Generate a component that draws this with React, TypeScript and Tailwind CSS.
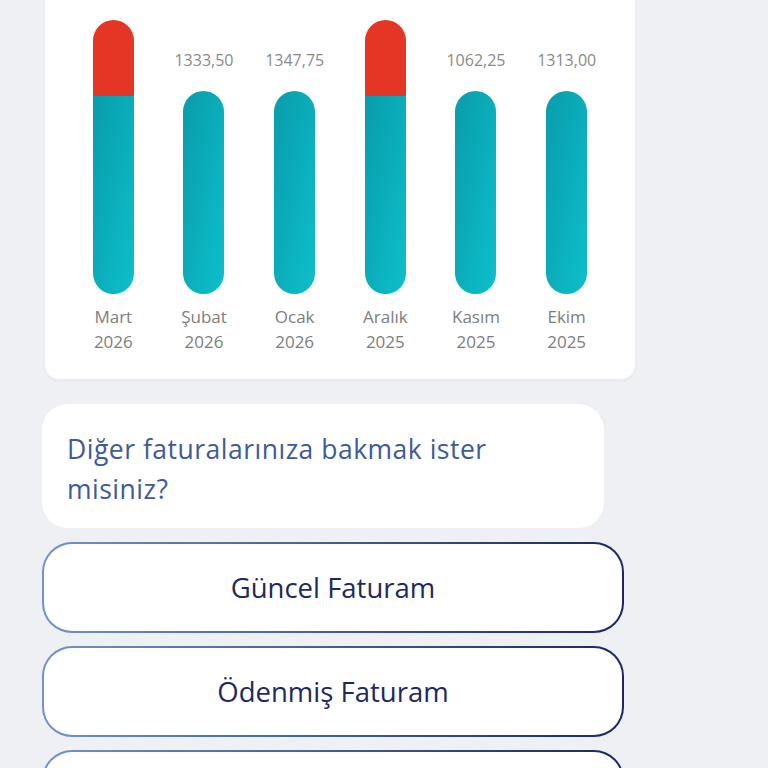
import React from 'react';

type Bill = {
  month: string;
  year: string;
  value?: string;
  over?: boolean;
};

const bills: Bill[] = [
  { month: 'Mart', year: '2026', over: true },
  { month: 'Şubat', year: '2026', value: '1333,50' },
  { month: 'Ocak', year: '2026', value: '1347,75' },
  { month: 'Aralık', year: '2025', over: true },
  { month: 'Kasım', year: '2025', value: '1062,25' },
  { month: 'Ekim', year: '2025', value: '1313,00' },
];

const BarColumn: React.FC<{ bill: Bill }> = ({ bill }) => {
  return (
    <div className="flex flex-col items-center">
      <div className="flex h-[294px] flex-col items-center justify-end">
        {bill.value && (
          <span className="mb-[20px] text-[16px] leading-[22px] text-[#8a8a8a]">{bill.value}</span>
        )}
        {bill.over ? (
          <div className="flex w-[41px] flex-col overflow-hidden rounded-full">
            <div className="h-[76px] bg-[#e53524]" />
            <div className="h-[198px] bg-gradient-to-br from-[#0a9cab] to-[#0cbfca]" />
          </div>
        ) : (
          <div className="h-[203px] w-[41px] rounded-full bg-gradient-to-br from-[#0a9cab] to-[#0cbfca]" />
        )}
      </div>
      <div className="mt-[10px] text-center text-[17px] leading-[25px] text-[#7d7d7d]">
        <div>{bill.month}</div>
        <div>{bill.year}</div>
      </div>
    </div>
  );
};

const OptionButton: React.FC<{ label?: string }> = ({ label }) => (
  <div className="w-[582px] rounded-[30px] bg-gradient-to-r from-[#7193cb] to-[#1a276a] p-[2px]">
    <div className="flex h-[87px] items-center justify-center rounded-[28px] bg-white text-[27.5px] text-[#1c2962]">
      {label}
    </div>
  </div>
);

export default function App() {
  return (
    <div
      className="h-[768px] overflow-hidden bg-[#eef0f4] pl-[42px]"
      style={{ fontFamily: '"Open Sans", "Noto Sans", sans-serif' }}
    >
      {/* Chart card */}
      <div className="-mt-[20px] ml-[3px] w-[590px] rounded-[14px] bg-white px-[23px] pt-[20px] pb-[25px] shadow-[0_1px_4px_rgba(0,0,0,0.05)]">
        <div className="grid grid-cols-6">
          {bills.map((b) => (
            <BarColumn key={b.month + b.year} bill={b} />
          ))}
        </div>
      </div>

      {/* Question bubble */}
      <div className="mt-[25px] w-[562px] rounded-[26px] bg-white px-[25px] pt-[25px] pb-[19px] text-[26.5px] leading-[40px] tracking-[0.5px] text-[#3d5a9b]">
        <p className="max-w-[480px]">Diğer faturalarınıza bakmak ister misiniz?</p>
      </div>

      {/* Options */}
      <div className="mt-[14px] flex flex-col gap-[13px]">
        <OptionButton label="Güncel Faturam" />
        <OptionButton label="Ödenmiş Faturam" />
        <OptionButton />
      </div>
    </div>
  );
}
